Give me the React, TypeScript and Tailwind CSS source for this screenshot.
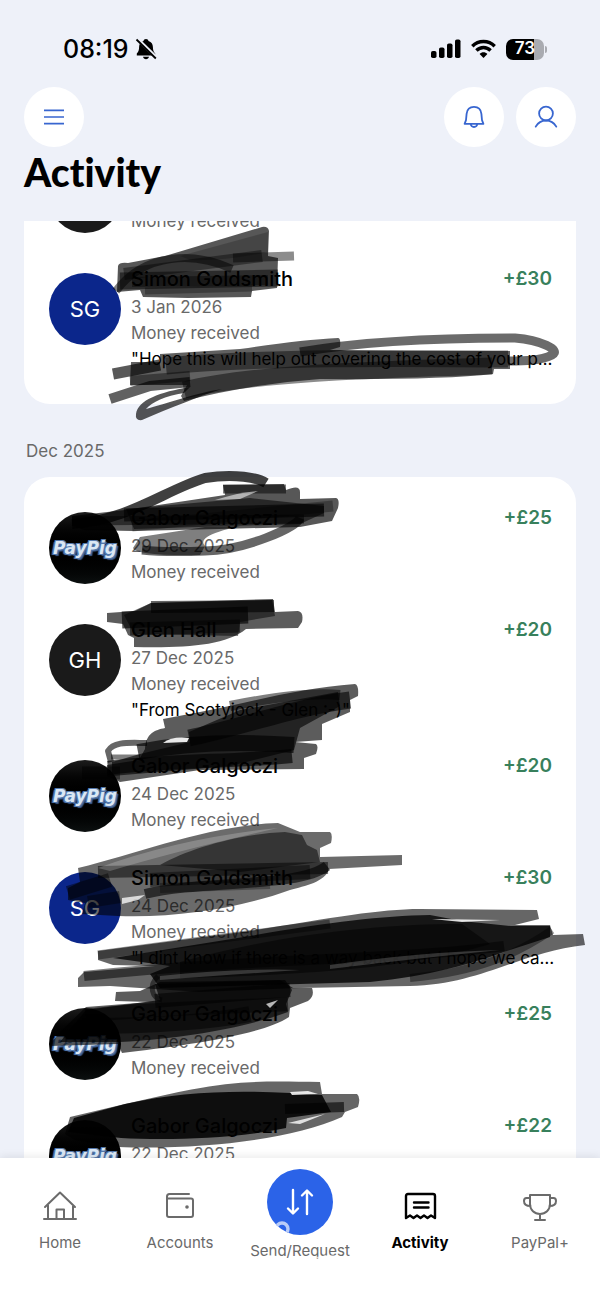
import React from "react";

type Entry = {
  name?: string;
  date?: string;
  status?: string;
  note?: string;
  amount?: string;
  avatar: "SG" | "GH" | "PayPig";
};

const received = "Money received";

const january: Entry[] = [
  { status: received, avatar: "GH" },
  {
    name: "Simon Goldsmith",
    date: "3 Jan 2026",
    status: received,
    note: '"Hope this will help out covering the cost of your p…',
    amount: "+£30",
    avatar: "SG",
  },
];

const december: Entry[] = [
  { name: "Gabor Galgoczi", date: "29 Dec 2025", status: received, amount: "+£25", avatar: "PayPig" },
  {
    name: "Glen Hall",
    date: "27 Dec 2025",
    status: received,
    note: '"From Scotyjock - Glen :-)"',
    amount: "+£20",
    avatar: "GH",
  },
  { name: "Gabor Galgoczi", date: "24 Dec 2025", status: received, amount: "+£20", avatar: "PayPig" },
  {
    name: "Simon Goldsmith",
    date: "24 Dec 2025",
    status: received,
    note: '"I dint know if there is a way back but I hope we ca…',
    amount: "+£30",
    avatar: "SG",
  },
  { name: "Gabor Galgoczi", date: "22 Dec 2025", status: received, amount: "+£25", avatar: "PayPig" },
  { name: "Gabor Galgoczi", date: "22 Dec 2025", amount: "+£22", avatar: "PayPig" },
];

function Avatar({ kind }: { kind: Entry["avatar"] }) {
  const base = "mt-[9px] flex size-[72px] shrink-0 items-center justify-center overflow-hidden rounded-full text-white";
  if (kind === "PayPig") {
    return (
      <div className={`${base} bg-linear-to-b from-[#1c1c1c] via-black to-[#0c1010]`}>
        <span className="font-['DejaVu_Sans'] text-[17px] font-bold italic leading-6 text-[#dbe7f4] [text-shadow:1px_1px_0_#5478ac,-1px_-1px_0_#5478ac,1px_-1px_0_#5478ac,-1px_1px_0_#5478ac,2px_2px_1px_#3d5c8e,-2px_1px_1px_#3d5c8e]">
          PayPig
        </span>
      </div>
    );
  }
  return <div className={`${base} text-[22px] ${kind === "SG" ? "bg-[#0b268b]" : "bg-[#1a1a1a]"}`}>{kind}</div>;
}

function Row({ entry }: { entry: Entry }) {
  return (
    <li className="flex gap-2.5 pb-[30px] pl-[25px] pr-6">
      <Avatar kind={entry.avatar} />
      <div className="min-w-0 flex-1 text-[17px] leading-[26px] text-[#696969]">
        <div className="flex h-[30px] justify-between leading-[30px]">
          <span className="text-[20px] font-medium text-black">{entry.name}</span>
          <span className="text-[19px] font-semibold text-[#38805c]">{entry.amount}</span>
        </div>
        <div className="h-[26px]">{entry.date}</div>
        <div className="h-[26px]">{entry.status}</div>
        {entry.note && <div className="h-6 whitespace-nowrap text-black">{entry.note}</div>}
      </div>
    </li>
  );
}

type Mark = { d: string; w?: number; o: number };

/* Marker strokes; entries without a width are filled areas. */
const marks: Mark[] = [
  // first name
  { d: "M117 292L118 266Q119 262 128 263L165 256L262 227Q268 226 269 231L268 256L278 258L277 288L252 291L251 297L188 298L143 297L140 290Z", o: 0.66 },
  { d: "M233 258L294 256", w: 9, o: 0.45 },
  { d: "M180 256L268 232L268 252Q220 262 190 260Z", o: 0.2 },
  { d: "M116 291C145 252 195 252 232 269", w: 8, o: 0.5 },
  { d: "M124 274L262 256", w: 12, o: 0.4 },
  { d: "M120 281L278 278", w: 17, o: 0.5 },
  { d: "M132 282L268 280", w: 10, o: 0.4 },
  { d: "M145 291L252 288", w: 7, o: 0.3 },
  // first note
  { d: "M160 354L240 349Q300 340 338 338Q341 338 340 347L330 350L400 351L510 351L510 369L494 369L493 374Q440 380 320 379Q250 384 184 401L181 396L187 385L130 385L131 362L160 362Z", o: 0.62 },
  { d: "M166 366C260 357 400 358 508 359", w: 17, o: 0.45 },
  { d: "M184 390C250 374 360 370 492 366", w: 17, o: 0.45 },
  { d: "M300 352C370 340 450 338 515 338C540 340 562 350 552 355C540 361 525 361 508 361", w: 9, o: 0.58 },
  { d: "M113 374L160 365", w: 11, o: 0.65 },
  { d: "M130 381L190 376", w: 10, o: 0.4 },
  { d: "M110 399L150 386L190 382", w: 10, o: 0.62 },
  { d: "M136 414C138 400 160 392 190 387L184 393C165 396 152 402 146 409C165 404 200 392 222 389C200 396 170 408 142 420Q135 421 136 414Z", o: 0.66 },
  // 29 Dec
  { d: "M72 524C130 520 165 490 205 478C235 473 258 478 266 483", w: 10, o: 0.75 },
  { d: "M125 510L225 495L223 485L284 484L286 490Q300 484 300 492L300 499L336 498Q340 499 338 508L332 521L300 527L220 529L133 531L84 530L72 525L72 516Z", o: 0.66 },
  { d: "M126 509L250 498L324 506L324 513L300 524L134 529Z", o: 0.55 },
  { d: "M124 515L324 510", w: 13, o: 0.6 },
  { d: "M72 521L304 519", w: 9, o: 0.5 },
  { d: "M223 489L286 489", w: 9, o: 0.5 },
  { d: "M132 526L333 506", w: 11, o: 0.3 },
  { d: "M133 548L140 537L205 527L240 526C205 534 200 540 205 546L200 555Q135 556 133 548Z", o: 0.5 },
  { d: "M142 550C160 552 180 552 205 551C245 550 296 528 300 518", w: 9, o: 0.6 },
  // 27 Dec
  { d: "M107 613L135 611L151 603L273 599L275 612L298 611Q304 612 302 622L298 628L246 629C225 646 185 648 134 647L134 638L128 635L123 624L107 622Z", o: 0.64 },
  { d: "M124 615L151 603L272 600L275 616L240 622L238 636L134 634Z", o: 0.5 },
  { d: "M122 620L248 615", w: 17, o: 0.65 },
  { d: "M151 607L274 606", w: 12, o: 0.6 },
  { d: "M130 629L240 626", w: 13, o: 0.5 },
  // note and following name
  { d: "M163 719L200 712C260 700 300 688 355 684Q359 685 358 696L350 700L350 712L322 724L322 740L295 742L316 744Q319 746 316 754L304 758L304 769L200 770L120 782L107 776L107 765L139 760L145 749C146 733 155 730 165 728Z", o: 0.64 },
  { d: "M189 732L240 710L338 692L340 706L300 728L294 750L230 766L112 776L112 762L140 754L190 742Z", o: 0.62 },
  { d: "M111 762L108 751C114 741 130 743 147 743", w: 6, o: 0.6 },
  { d: "M111 757L140 757", w: 5, o: 0.5 },
  { d: "M189 738C240 728 290 708 350 700", w: 17, o: 0.6 },
  { d: "M230 706C270 698 310 692 340 695", w: 10, o: 0.5 },
  { d: "M138 752C190 742 250 742 294 745", w: 16, o: 0.65 },
  { d: "M108 768C170 760 230 762 292 756", w: 14, o: 0.65 },
  { d: "M82 773L120 773", w: 13, o: 0.45 },
  // 24 Dec name
  { d: "M78 868C140 853 210 825 278 823L300 832L330 832Q333 834 331 843L320 848L320 857L402 855L402 865L329 869C325 882 305 886 290 890C240 908 180 918 118 916L82 914L85 903L68 900L68 888L80 882Z", o: 0.58 },
  { d: "M160 865C190 848 240 834 285 832L302 835L307 845L317 850L320 862L240 872Z", o: 0.5 },
  { d: "M98 872L328 868", w: 12, o: 0.5 },
  { d: "M145 894C200 880 300 888 327 866", w: 10, o: 0.6 },
  { d: "M150 880L310 872", w: 14, o: 0.45 },
  { d: "M160 888L270 884", w: 10, o: 0.3 },
  { d: "M68 893L110 880", w: 14, o: 0.45 },
  { d: "M88 902L120 897", w: 12, o: 0.4 },
  // long note
  { d: "M98 951L250 931C330 918 380 909 420 909L537 910L539 919L515 925L550 925L553 935L583 934L585 945C520 952 480 985 410 986L300 988L200 992L110 986L78 987L78 978L84 972L155 966L113 965L98 960Z", o: 0.6 },
  { d: "M113 958L250 936C330 922 380 916 430 915L462 921L511 926L550 926L550 937L510 950C470 964 430 976 370 982L300 984L160 988L150 974L170 966Z", o: 0.78 },
  { d: "M180 962C280 934 380 924 462 924L490 944C430 962 350 974 180 978Z", o: 0.5 },
  { d: "M98 955C180 944 250 934 330 924", w: 9, o: 0.4 },
  { d: "M84 976C250 958 400 960 504 946", w: 10, o: 0.5 },
  { d: "M410 978C480 972 520 952 552 930", w: 8, o: 0.4 },
  // 22 Dec name
  { d: "M50 1044L62 1030L86 1007L150 1002L115 1001L116 992L140 991L160 982L280 980L293 988L312 988Q315 996 308 1001L290 1008L289 1017C260 1036 180 1046 122 1053L118 1044L50 1046Z", o: 0.64 },
  { d: "M86 1010L160 1000L155 984L285 980L292 990L286 1004L288 1012C250 1026 190 1038 120 1042L60 1042Z", o: 0.68 },
  { d: "M155 1001L290 990", w: 14, o: 0.55 },
  { d: "M86 1016C150 1008 220 1008 288 1004", w: 14, o: 0.5 },
  { d: "M82 1026C150 1026 210 1022 250 1014", w: 16, o: 0.5 },
  { d: "M158 976C148 986 152 998 162 1000", w: 5, o: 0.5 },
  // last name
  { d: "M70 1117L125 1104L165 1095C230 1080 260 1081 320 1082L322 1094L357 1094Q361 1097 358 1107L345 1112L342 1117C290 1140 200 1150 118 1147L75 1140L65 1134Z", o: 0.6 },
  { d: "M125 1104C180 1092 230 1090 290 1093L322 1095L331 1112L287 1118L286 1128C230 1140 160 1140 121 1138L68 1132L74 1118Z", o: 0.86 },
  { d: "M285 1109L344 1107", w: 10, o: 0.6 },
];

function Scribbles() {
  return (
    <svg
      aria-hidden="true"
      className="pointer-events-none absolute left-0 top-0"
      width="600"
      height="1158"
      viewBox="0 0 600 1158"
      fill="none"
    >
      {marks.map((m, i) =>
        m.w ? (
          <path key={i} d={m.d} stroke="#000" strokeOpacity={m.o} strokeWidth={m.w} strokeLinejoin="round" />
        ) : (
          <path key={i} d={m.d} fill="#000" fillOpacity={m.o} />
        ),
      )}
      {/* gaps left between strokes */}
      <g fill="#fff">
        <path fillOpacity="0.9" d="M163 743Q172 736 189 738L187 742Z" />
        <path fillOpacity="0.55" d="M215 500Q240 492 258 491L240 499Z" />
        <path fillOpacity="0.7" d="M266 1004L278 1000L270 1008Z" />
        <path fillOpacity="0.85" d="M432 919L500 920L462 922Z" />
        <path fillOpacity="0.85" d="M290 1092L308 1091L318 1094L292 1095Z" />
        <path fillOpacity="0.8" d="M288 1123L325 1114L300 1124Z" />
        <path fillOpacity="0.75" d="M122 898L145 895L138 900L122 904Z" />
        <path fillOpacity="0.18" d="M160 976Q240 968 300 970Q240 974 160 980Z" />
        <path fillOpacity="0.18" d="M330 965Q420 952 500 950Q420 958 330 969Z" />
        <path fillOpacity="0.2" d="M98 868Q180 838 278 828Q180 850 110 871Z" />
      </g>
    </svg>
  );
}

function StatusBar() {
  return (
    <div className="flex h-[87px] items-center justify-between pl-[63px] pr-[53px] pt-[11px]">
      <div className="flex items-center gap-1.5">
        <span className="text-[25px] font-medium leading-8">08:19</span>
        <svg width="22" height="22" viewBox="0 0 22 22" aria-label="Silent">
          <path
            d="M11 1C12.4 1 13.3 1.8 13.5 2.9C16.6 4 17.8 6 17.9 9C18 13 19 14.300 20.200 15.600V17.600H1.800V15.600C3 14.300 4 13 4.100 9C4.200 6 5.400 4 8.500 2.900C8.700 1.800 9.600 1 11 1ZM8 18.800H14C13.700 20.500 12.500 21.200 11 21.200S8.300 20.500 8 18.800Z"
            fill="#000"
          />
          <path d="M2.200 0.800L22 20" stroke="#eef1f9" strokeWidth="3.400" />
          <path d="M1.500 1.500L20.800 20.500" stroke="#000" strokeWidth="1.800" />
        </svg>
      </div>
      <div className="flex items-center gap-2.5">
        <svg width="30" height="20" viewBox="0 0 30 20" aria-label="Signal">
          <rect x="0" y="12" width="5.500" height="7" rx="1.800" />
          <rect x="8" y="8.500" width="5.500" height="10.500" rx="1.800" />
          <rect x="16" y="4.500" width="5.500" height="14.500" rx="1.800" />
          <rect x="24" y="0.500" width="5.500" height="18.500" rx="1.800" />
        </svg>
        <svg width="25" height="20" viewBox="0 0 25 20" fill="none" stroke="#000" strokeWidth="3.400" aria-label="Wi-Fi">
          <path d="M1.300 7.200C7.500 0.900 17.500 0.900 23.700 7.200" />
          <path d="M5.400 11.500C9.400 7.500 15.600 7.500 19.600 11.500" />
          <path d="M8.600 15C10.700 12.600 14.300 12.600 16.400 15L12.500 19Z" fill="#000" stroke="none" />
        </svg>
        <div className="flex items-center gap-px">
          <div className="flex h-[21px] w-[38px] items-center justify-center rounded-[7px] bg-[linear-gradient(to_right,#000_73%,#a9abb1_73%)] text-[17px] font-semibold text-white">
            73
          </div>
          <div className="h-[7px] w-[2px] rounded-r-full bg-[#a9abb1]" />
        </div>
      </div>
    </div>
  );
}

const roundButton = "flex size-[60px] items-center justify-center rounded-full bg-white";

function Header() {
  return (
    <header className="px-6">
      <div className="flex h-[60px] items-center gap-3">
        <button type="button" aria-label="Menu" className={`${roundButton} mr-auto`}>
          <svg width="24" height="24" viewBox="0 0 24 24" fill="none" stroke="#3866d0" strokeWidth="1.700">
            <path d="M2 5.300H22M2 12H22M2 18.700H22" />
          </svg>
        </button>
        <button type="button" aria-label="Notifications" className={roundButton}>
          <svg width="24" height="24" viewBox="0 0 24 24" fill="none" stroke="#3866d0" strokeWidth="1.800" strokeLinejoin="round">
            <path d="M4.600 8.800C5.100 4.300 8 1.900 12 1.900S18.900 4.300 19.400 8.800L20 15.200L21.400 18.800H2.600L4 15.200Z" />
            <path d="M8.800 19C9 21.200 10.400 22 12 22S15 21.200 15.200 19" />
          </svg>
        </button>
        <button type="button" aria-label="Profile" className={roundButton}>
          <svg width="24" height="24" viewBox="0 0 24 24" fill="none" stroke="#3866d0" strokeWidth="1.800" strokeLinecap="round">
            <circle cx="12" cy="8.600" r="6.900" />
            <path d="M1.700 21.600C4.100 17.400 7.700 15.500 12 15.500S19.900 17.400 22.300 21.600" />
          </svg>
        </button>
      </div>
      <h1 className="h-[74px] font-['Lato'] text-[39px] font-black leading-[50px] text-black [font-variant-ligatures:none]">
        Activity
      </h1>
    </header>
  );
}

const navIcon = { width: 36, height: 32, viewBox: "0 0 36 32", fill: "none", strokeWidth: 2 };
const navLink = "flex flex-col items-center gap-[9px] pt-8 text-[15px] leading-6 text-[#696969]";

function BottomNav() {
  return (
    <nav className="relative grid h-[146px] shrink-0 grid-cols-5 bg-white shadow-[0_-2px_8px_rgba(0,0,0,0.08)]">
      <a href="#home" className={navLink}>
        <svg {...navIcon} stroke="#6b6b6b" strokeLinejoin="round" strokeLinecap="round">
          <path d="M2 29H34M3 17L18 2.500L33 17M6 15V29M31 15V29M14.500 29V19.500H22V29" />
        </svg>
        Home
      </a>
      <a href="#accounts" className={navLink}>
        <svg {...navIcon} stroke="#6b6b6b" strokeLinejoin="round" strokeLinecap="round">
          <path d="M27 4H7.500Q5 4 5 6.500V25Q5 27 7 27H29Q31 27 31 25V10.500Q31 8.500 29 8.500H5" />
          <circle cx="25" cy="17" r="1.800" fill="#6b6b6b" stroke="none" />
        </svg>
        Accounts
      </a>
      <a href="#send" className="flex flex-col items-center gap-1 pt-[11px] text-[15px] leading-6 text-[#696969]">
        <span className="flex size-[66px] items-center justify-center overflow-hidden rounded-full bg-[#2b63e8]">
          <svg width="66" height="66" viewBox="0 0 66 66" fill="none" stroke="#fff" strokeWidth="2.400" strokeLinecap="round" strokeLinejoin="round">
            <path d="M26 21V44M21 39.500L26 44.500L31 39.500M40 45V22M35 26.500L40 21.500L45 26.500" />
            <circle cx="15" cy="60" r="6" stroke="#b9ccf8" strokeWidth="3.400" />
          </svg>
        </span>
        <span className="relative whitespace-nowrap">
          Send/Request
          <svg className="absolute left-0 top-3.5" width="100" height="8" viewBox="0 0 100 8" aria-hidden="true">
            <path d="M10 4L20 2L34 4L37 8H10ZM66 4L78 2L100 4V8H70Z" fill="#fff" fillOpacity="0.700" />
          </svg>
        </span>
      </a>
      <a href="#activity" aria-current="page" className={`${navLink} font-bold !text-black`}>
        <svg {...navIcon} stroke="#000" strokeWidth="2.400" strokeLinejoin="round" strokeLinecap="round">
          <path d="M4 28V6Q4 4 6 4H31Q33 4 33 6V28L29 25.500L25.500 28L22 25.500L18.500 28L15 25.500L11.500 28L8 25.500ZM12 12.500H26.500M12 17.500H26.500" />
        </svg>
        Activity
      </a>
      <a href="#plus" className={navLink}>
        <svg {...navIcon} stroke="#6b6b6b" strokeLinejoin="round" strokeLinecap="round">
          <path d="M8 5H28V14C28 20 23.500 24 18 24S8 20 8 14ZM8 8H4.500Q2 8 2 11C2 14 4 16 8.500 16M28 8H31.500Q34 8 34 11C34 14 32 16 27.500 16M18 24V30M13 30H23" />
        </svg>
        PayPal+
      </a>
    </nav>
  );
}

export default function App() {
  return (
    <div className="relative flex h-screen flex-col overflow-hidden bg-[#eef1f9] font-['Inter',sans-serif] text-black">
      <StatusBar />
      <Header />
      <main className="min-h-0 flex-1 overflow-hidden px-6">
        <ul className="-mt-[69px] rounded-b-[26px] bg-white pb-1">
          {january.map((e, i) => (
            <Row key={i} entry={e} />
          ))}
        </ul>
        <h2 className="h-[73px] pl-0.5 pt-[34px] text-[17px] leading-[26px] text-[#696969]">Dec 2025</h2>
        <ul className="rounded-t-[26px] bg-white pt-[26px]">
          {december.map((e, i) => (
            <Row key={i} entry={e} />
          ))}
        </ul>
      </main>
      <Scribbles />
      <BottomNav />
    </div>
  );
}
